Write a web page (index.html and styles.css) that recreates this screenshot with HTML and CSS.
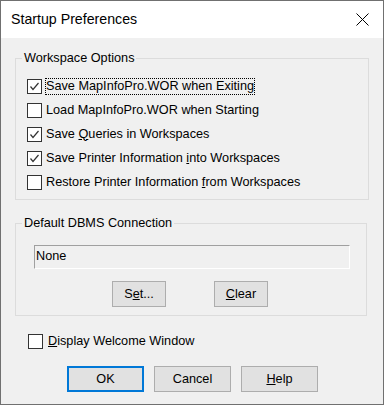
FILE: index.html
```html
<!DOCTYPE html>
<html lang="en">
<head>
    <meta charset="UTF-8">
    <title>Startup Preferences</title>
    <link rel="stylesheet" href="styles.css">
</head>
<body>

<div class="dialog">
    <div class="titlebar">
        <span class="title">Startup Preferences</span>
        <svg class="close" width="13" height="13" viewBox="0 0 13 13">
            <path d="M0.5 0.5L12.5 12.5M12.5 0.5L0.5 12.5" />
        </svg>
    </div>

    <div class="content">
        <!-- Workspace options -->
        <fieldset class="group group-ws">
            <legend>Workspace Options</legend>
            <div class="check-row">
                <span class="box"><svg viewBox="0 0 13 13"><polyline points="2.5,6.5 5,9.5 10.5,3" /></svg></span>
                <span class="label focus">Save MapInfoPro.WOR when Exiting</span>
            </div>
            <div class="check-row">
                <span class="box"></span>
                <span class="label">Load MapInfoPro.WOR when Starting</span>
            </div>
            <div class="check-row">
                <span class="box"><svg viewBox="0 0 13 13"><polyline points="2.5,6.5 5,9.5 10.5,3" /></svg></span>
                <span class="label">Save <u>Q</u>ueries in Workspaces</span>
            </div>
            <div class="check-row">
                <span class="box"><svg viewBox="0 0 13 13"><polyline points="2.5,6.5 5,9.5 10.5,3" /></svg></span>
                <span class="label">Save Printer Information <u>i</u>nto Workspaces</span>
            </div>
            <div class="check-row">
                <span class="box"></span>
                <span class="label">Restore Printer Information <u>f</u>rom Workspaces</span>
            </div>
        </fieldset>

        <!-- DBMS connection -->
        <fieldset class="group group-dbms">
            <legend>Default DBMS Connection</legend>
            <div class="field">None</div>
            <div class="set-row">
                <button class="btn btn-small">S<u>e</u>t...</button>
                <button class="btn btn-small"><u>C</u>lear</button>
            </div>
        </fieldset>

        <div class="check-row welcome">
            <span class="box"></span>
            <span class="label"><u>D</u>isplay Welcome Window</span>
        </div>

        <div class="dialog-buttons">
            <button class="btn btn-default">OK</button>
            <button class="btn">Cancel</button>
            <button class="btn"><u>H</u>elp</button>
        </div>
    </div>
</div>

</body>
</html>
```

FILE: styles.css
```css
body {
    margin: 0;
    padding: 0;
    font-family: "Liberation Sans", Arial, sans-serif;
    font-size: 12.7px;
    color: #000;
}
.dialog {
    width: 384px;
    height: 405px;
    box-sizing: border-box;
    border: 1px solid #707070;
    background-color: #f0f0f0;
}
.titlebar {
    height: 37px;
    background-color: #ffffff;
    display: flex;
    align-items: center;
    padding: 0 14px 0 10px;
}
.title {
    flex: 1;
    font-size: 14.2px;
    padding-bottom: 1px;
}
.close {
    stroke: #000;
    stroke-width: 1;
    fill: none;
}
.content {
    padding: 12px 0 0 14px;
}
.group {
    margin: 0;
    padding: 0 6px;
    border: 1px solid #dcdcdc;
}
.group legend {
    padding: 0 2px;
    line-height: 16px;
}
.group-ws {
    width: 354px;
    box-sizing: border-box;
    padding-top: 8px;
    padding-bottom: 5px;
}
.group-dbms {
    width: 352px;
    box-sizing: border-box;
    margin-top: 15px;
    padding-bottom: 8px;
}
.check-row {
    display: flex;
    align-items: center;
    height: 24px;
    padding-left: 5px;
}
.box {
    width: 13px;
    height: 13px;
    border: 1px solid #333333;
    background-color: #ffffff;
    flex-shrink: 0;
}
.box svg {
    display: block;
    width: 13px;
    height: 13px;
    fill: none;
    stroke: #333333;
    stroke-width: 1.2;
}
.label {
    margin-left: 3px;
    padding: 1px 1px;
    max-width: 255px;
    overflow: hidden;
    white-space: nowrap;
    line-height: 15px;
}
.label.focus {
    outline: 1px dotted #000;
    outline-offset: -1px;
}
.field {
    margin: 14px 0 0 12px;
    width: 316px;
    height: 24px;
    box-sizing: border-box;
    border-top: 1px solid #a0a0a0;
    border-left: 1px solid #a0a0a0;
    border-right: 1px solid #ffffff;
    border-bottom: 1px solid #ffffff;
    padding-left: 1px;
    line-height: 21px;
}
.set-row {
    display: flex;
    gap: 48px;
    margin-top: 12px;
    padding-left: 90px;
}
.btn {
    font: inherit;
    color: #000;
    background-color: #e1e1e1;
    border: 1px solid #adadad;
    width: 77px;
    height: 26px;
    padding: 0;
    margin: 0;
}
.btn-small {
    width: 54px;
}
.btn-default {
    border: 2px solid #0078d7;
}
.welcome {
    margin-top: 13px;
    padding-left: 13px;
}
.welcome .label {
    margin-left: 4px;
}
.dialog-buttons {
    display: flex;
    gap: 10px;
    margin-top: 13px;
    padding-left: 52px;
}
```
